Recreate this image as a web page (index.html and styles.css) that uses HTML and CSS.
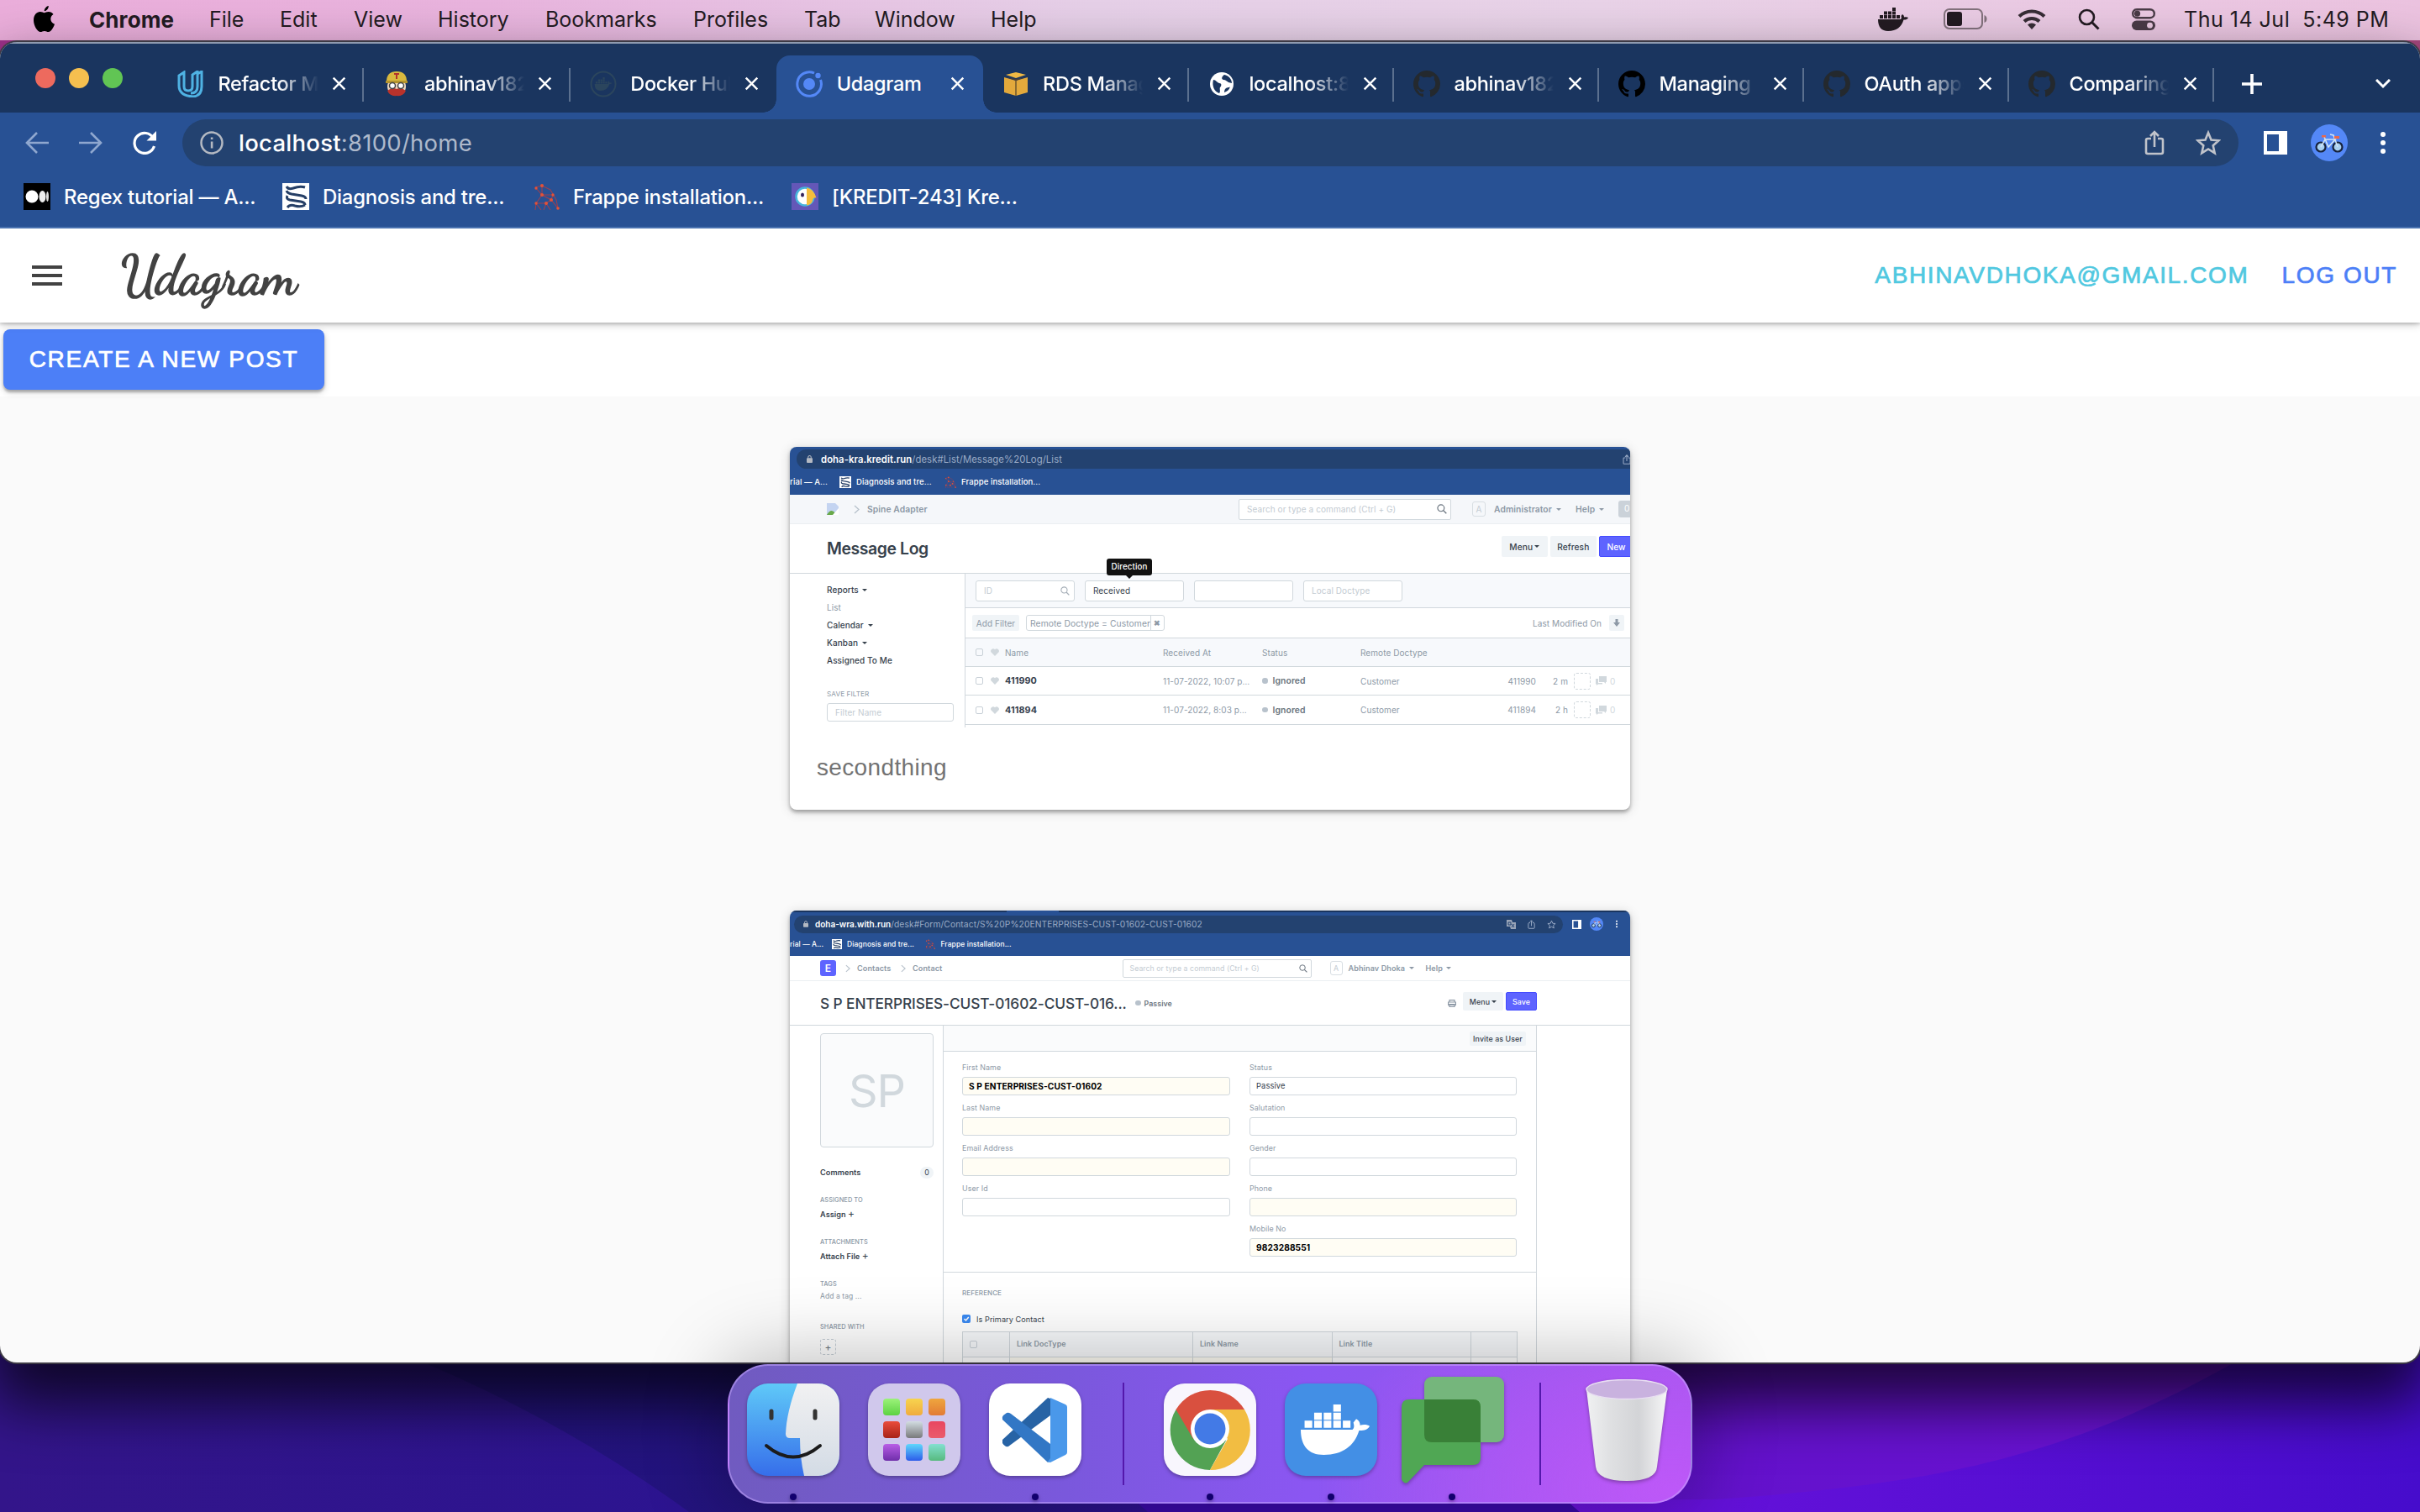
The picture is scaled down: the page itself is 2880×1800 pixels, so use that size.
FILE: index.html
```html
<!DOCTYPE html>
<html lang="en">
<head>
<meta charset="utf-8">
<title>Udagram</title>
<link rel="stylesheet" href="styles.css">
</head>
<body>
<svg class="defs" width="0" height="0" aria-hidden="true">
  <defs>
    <linearGradient id="gFinder" x1="0" y1="0" x2="0" y2="1"><stop offset="0" stop-color="#5fc9f8"/><stop offset="1" stop-color="#366eea"/></linearGradient>
    <linearGradient id="gFace" x1="0" y1="0" x2="0" y2="1"><stop offset="0" stop-color="#f1f1f2"/><stop offset="1" stop-color="#d3dbe5"/></linearGradient>
    <linearGradient id="gTrash" x1="0" y1="0" x2="1" y2="0"><stop offset="0" stop-color="#f0f1f2"/><stop offset=".3" stop-color="#dfe0e2"/><stop offset=".65" stop-color="#d3d4d7"/><stop offset="1" stop-color="#f6f6f7"/></linearGradient>
    <linearGradient id="gLeft" x1="0" y1="0" x2="1" y2="0"><stop offset="0" stop-color="#33158a"/><stop offset="1" stop-color="#2c1490"/></linearGradient>
    <linearGradient id="gMid" x1="0" y1="0" x2="1" y2="0"><stop offset="0" stop-color="#251284"/><stop offset=".4" stop-color="#22147a"/><stop offset=".55" stop-color="#3a0da8"/><stop offset=".72" stop-color="#6412cc"/><stop offset="1" stop-color="#6d12d8"/></linearGradient>
    <linearGradient id="gRight" x1="0" y1="0" x2="1" y2="0"><stop offset="0" stop-color="#6a12dc"/><stop offset="1" stop-color="#460ccc"/></linearGradient>
    <symbol id="close" viewBox="0 0 20 20"><path d="M2 2 18 18M18 2 2 18" stroke="#fff" stroke-width="2.8" fill="none"/></symbol>
    <symbol id="github" viewBox="0 0 16 16"><path d="M8 0C3.58 0 0 3.58 0 8c0 3.54 2.29 6.53 5.47 7.59.4.07.55-.17.55-.38 0-.19-.01-.82-.01-1.49-2.01.37-2.53-.49-2.69-.94-.09-.23-.48-.94-.82-1.13-.28-.15-.68-.52-.01-.53.63-.01 1.08.58 1.23.82.72 1.21 1.87.87 2.33.66.07-.52.28-.87.51-1.07-1.78-.2-3.64-.89-3.64-3.95 0-.87.31-1.59.82-2.15-.08-.2-.36-1.02.08-2.12 0 0 .67-.21 2.2.82.64-.18 1.32-.27 2-.27s1.36.09 2 .27c1.53-1.04 2.2-.82 2.2-.82.44 1.1.16 1.92.08 2.12.51.56.82 1.27.82 2.15 0 3.07-1.87 3.75-3.65 3.95.29.25.54.73.54 1.48 0 1.07-.01 1.93-.01 2.2 0 .21.15.46.55.38A8.01 8.01 0 0 0 16 8c0-4.42-3.58-8-8-8z"/></symbol>
    <symbol id="whale" viewBox="0 0 36 28"><path d="M0 14h27c1-1 1-2 .5-4l1.500-2c1.500 1 2 2 2 3.500 2-.5 4-.3 5 .5-1 2-3 2.600-5.500 2.500C28 23 22 28 12 28 4 28 0 23 0 14z"/><path d="M2 9h4v4H2zM7 9h4v4H7zM12 9h4v4h-4zM17 9h4v4h-4zM22 9h4v4h-4zM7 4.500h4v4H7zM12 4.500h4v4h-4zM17 4.500h4v4h-4zM17 0h4v4h-4z"/></symbol>
    <symbol id="share" viewBox="0 0 24 30"><path d="M8 10H4q-2 0-2 2v14q0 2 2 2h16q2 0 2-2V12q0-2-2-2h-4M12 20V3M7 7l5-5 5 5" fill="none" stroke="currentColor" stroke-width="2.600"/></symbol>
    <symbol id="star" viewBox="0 0 30 30"><path d="m15 3 3.500 8.500 9 .8-6.800 6 2 8.900L15 22.500l-7.700 4.700 2-8.900-6.800-6 9-.8z" fill="none" stroke="currentColor" stroke-width="2.600"/></symbol>
    <symbol id="lens" viewBox="0 0 26 26"><circle cx="10.500" cy="10.500" r="8.500" fill="none" stroke="currentColor" stroke-width="2.600"/><path d="m16.500 16.500 8 8" stroke="currentColor" stroke-width="3"/></symbol>
    <symbol id="lock" viewBox="0 0 8 10"><rect y="3.500" width="8" height="6.500" rx="1"/><path d="M2 4V2.500a2 2 0 0 1 4 0V4" fill="none" stroke="currentColor" stroke-width="1.200"/></symbol>
    <symbol id="chev" viewBox="0 0 7 11"><path d="m1 1 5 4.500L1 10" fill="none" stroke="#b8c2cc" stroke-width="1.300"/></symbol>
    <symbol id="heart" viewBox="0 0 10 9"><path d="M5 9 .8 4.800A2.600 2.600 0 0 1 5 1.300 2.600 2.600 0 0 1 9.200 4.800z" fill="#d1d8dd"/></symbol>
    <symbol id="chat" viewBox="0 0 13 11"><path d="M4 0h9v7h-1v2l-2-2H4z" fill="#d1d8dd"/><path d="M0 3h3v5h5v1.500H3L1 11V9.500H0z" fill="#d1d8dd"/></symbol>
    <symbol id="script" viewBox="0 0 32 32"><path d="M0 0h32v32H0z" fill="#fff"/><g fill="none" stroke="#263f66" stroke-width="3"><path d="M5 4q2 4 8 2 8-3 14-1"/><path d="M5 9q1 3 6 4l12 2q5 1 5 4"/><path d="M6 15q-2 4 3 5l13 2q5 1 5 4"/><path d="M6 29q3-4 9-2 7 2 12-1"/></g></symbol>
    <symbol id="net" viewBox="0 0 32 32"><path d="M3 5 11 3 21 8 28 20 30 30M4 6 11 14 22 20 30 30M11 3v11M11 14 4 24M11 14l13 0M24 14l-2 6M16 24l6-4M4 24l12 0M4 24l-1 8M4 24l6 8M16 24l-3 8M16 24l5 8" fill="none" stroke="#9a4052" stroke-width="1.100"/><g fill="#e25238"><circle cx="11" cy="3" r="2"/><circle cx="4" cy="6" r="1.700"/><circle cx="11" cy="14" r="2"/><circle cx="24" cy="14" r="1.700"/><circle cx="4" cy="24" r="1.700"/><circle cx="16" cy="24" r="2"/><circle cx="22" cy="20" r="2"/><circle cx="30" cy="30" r="1.800"/></g></symbol>
    <symbol id="bike" viewBox="0 0 44 44"><circle cx="22" cy="22" r="22" fill="#5488f7"/><g fill="#a9d0f0" stroke="#17233d" stroke-width="2.200"><circle cx="12" cy="27" r="5.500"/><circle cx="32" cy="27" r="5.500"/></g><path d="M12 27 17 18h12l-8 9-5-12M32 27 27 13l-4-1" fill="none" stroke="#cfe3f5" stroke-width="1.600"/><path d="M13 13h5v2.500h-5zM28 14h6v3h-6z" fill="#e8694d"/></symbol>
  </defs>
</svg>

<div class="desktop">
  <svg class="wallpaper" viewBox="0 0 2880 240" preserveAspectRatio="none">
    <rect width="2880" height="240" fill="url(#gMid)"/>
    <path d="M0 0H330Q600 80 820 240H0z" fill="url(#gLeft)"/>
    <path d="M1350 226 1366 240H1880L1864 226z" fill="#3a0aa8"/>
    <path d="M2760 0C2500 170 2330 205 2040 225L1864 226 1880 240H2880V0z" fill="url(#gRight)"/>
  </svg>

  <header class="menubar">
    <nav class="menus">
      <svg class="apple" viewBox="0 0 25 32"><path d="M17.800 0c.2 2.600-1.800 6-5 6.300C12.500 3.700 15 .6 17.800 0zM12.800 8.200c1 0 2.700-1.300 5-1.200 2.400.1 4.400 1.200 5.700 3-4.800 3.100-4 9.800 1.500 11.700-1.500 4.300-4.300 9.300-7.400 9.300-1.800 0-2.500-1.100-4.700-1.100S9.800 31 8.200 31C4.500 31 0 23.300 0 17.200 0 10.500 4 7.100 7.800 7.100c2.100 0 3.800 1.100 5 1.100z"/></svg>
      <b class="m1">Chrome</b><span class="m2">File</span><span class="m3">Edit</span><span class="m4">View</span><span class="m5">History</span><span class="m6">Bookmarks</span><span class="m7">Profiles</span><span class="m8">Tab</span><span class="m9">Window</span><span>Help</span>
    </nav>
    <div class="status">
      <svg width="36" height="28" fill="#231b22"><use href="#whale"/></svg>
      <svg width="52" height="26" viewBox="0 0 52 26"><rect x="1" y="1" width="45" height="23" rx="6" fill="none" stroke="#83727d" stroke-width="2"/><rect x="4" y="4" width="18" height="17" rx="3" fill="#231b22"/><path d="M48.500 8q3 1 3 4.500t-3 4.500z" fill="#83727d"/></svg>
      <svg width="34" height="26" viewBox="0 0 34 26"><path d="M2 9.500a21.500 21.500 0 0 1 30 0M8 15.500a13 13 0 0 1 18 0" fill="none" stroke="#372c35" stroke-width="4"/><path d="m17 25-5-5.500a7.500 7.500 0 0 1 10 0z" fill="#372c35"/></svg>
      <svg width="26" height="26" color="#231b22"><use href="#lens"/></svg>
      <svg width="28" height="26" viewBox="0 0 28 26"><rect x="1.200" y="1.200" width="25.600" height="10" rx="5" fill="none" stroke="#4a3b47" stroke-width="2.400"/><circle cx="6.500" cy="6.200" r="3.600" fill="#4a3b47"/><rect y="14.500" width="28" height="11.500" rx="5.700" fill="#4a3b47"/><circle cx="21.500" cy="20.200" r="3.400" fill="#e9c9e0"/></svg>
      <span class="clock">Thu 14 Jul&nbsp; 5:49 PM</span>
    </div>
  </header>

  <main class="window">
    <div class="tabstrip">
      <div class="lights"><i class="red"></i><i class="yellow"></i><i class="green"></i></div>
      <div class="tab wide"><svg width="32" height="32" viewBox="0 0 32 32"><path d="M2 6 8 2v17q0 5 5 5t5-5V5l6-4v3l5-3v18q0 11-10 12Q2 30 2 18zM24 4v15q0 8-8 8" fill="none" stroke="#4fb2e3" stroke-width="3"/></svg><span>Refactor Mon</span><svg width="17" height="17"><use href="#close"/></svg></div>
      <div class="tab wide"><svg width="32" height="32" viewBox="0 0 32 32"><circle cx="16" cy="19" r="11" fill="#efd9bd"/><path d="M4 13Q4 1 16 1t12 12z" fill="#d9b93e"/><path d="M3 12h26v3H3z" fill="#b5942c"/><path d="M13 3h6v2h-2v5h-2V5h-2z" fill="#b3312c"/><path d="M5 24q6-5 11-2 5-3 11 2-3 7-11 6-8 1-11-6z" fill="#b9322b"/><g fill="#fff" stroke="#444" stroke-width="1.500"><circle cx="11" cy="18" r="3.500"/><circle cx="21" cy="18" r="3.500"/></g></svg><span>abhinav182</span><svg width="17" height="17"><use href="#close"/></svg></div>
      <div class="tab wide plain"><svg width="32" height="32" viewBox="0 0 32 32"><circle cx="16" cy="16" r="14.500" fill="none" stroke="#2b455d" stroke-width="2"/><svg x="5" y="8" width="22" height="16" fill="#2b455d"><use href="#whale"/></svg></svg><span>Docker Hub</span><svg width="17" height="17"><use href="#close"/></svg></div>
      <div class="tab wide active"><svg width="32" height="32" viewBox="0 0 32 32"><path d="M22 3A14.300 14.300 0 1 0 29.500 11" fill="none" stroke="#5488f7" stroke-width="3"/><circle cx="16" cy="16" r="7" fill="#5488f7"/><circle cx="26.500" cy="6" r="3.200" fill="#5488f7"/></svg><span>Udagram</span><svg width="17" height="17"><use href="#close"/></svg></div>
      <div class="tab wide"><svg width="28" height="28" viewBox="0 0 28 28"><path d="M0 6 14 10 28 6V24L14 28 0 24z" fill="#e3a93c"/><path d="M2 3 14 0 26 3 14 7z" fill="#f0b944"/><path d="M13 8h2v20h-2z" fill="#8a6a30"/><path d="m3 6 11 4 11-4-11 2z" fill="#4c3f35"/></svg><span>RDS Manag</span><svg width="17" height="17"><use href="#close"/></svg></div>
      <div class="tab"><svg width="28" height="28" viewBox="0 0 28 28"><circle cx="14" cy="14" r="14" fill="#fff"/><path d="M4 9c3 0 4 3 7 4 3 0 3 3 1 5-1 2 1 5-1 7-6-2-9-9-7-16zM17 3c-3 2-4 5-1 6 3 0 4 2 6 3l4 1C26 8 22 4 17 3zM17 24c0-4 2-6 6-6l1-1c-1 4-4 6-7 7z" fill="#1a355f"/></svg><span>localhost:8</span><svg width="17" height="17"><use href="#close"/></svg></div>
      <div class="tab"><svg width="32" height="32" fill="#24292e"><use href="#github"/></svg><span>abhinav182</span><svg width="17" height="17"><use href="#close"/></svg></div>
      <div class="tab"><svg width="32" height="32" fill="#000"><use href="#github"/></svg><span>Managing</span><svg width="17" height="17"><use href="#close"/></svg></div>
      <div class="tab"><svg width="32" height="32" fill="#24292e"><use href="#github"/></svg><span>OAuth apps</span><svg width="17" height="17"><use href="#close"/></svg></div>
      <div class="tab"><svg width="32" height="32" fill="#24292e"><use href="#github"/></svg><span>Comparing</span><svg width="17" height="17"><use href="#close"/></svg></div>
      <svg class="plus" width="24" height="24" viewBox="0 0 24 24"><path d="M12 0v24M0 12h24" stroke="#fff" stroke-width="3.600"/></svg>
      <svg class="more" width="18" height="12" viewBox="0 0 18 12"><path d="m1 1 8 8 8-8" fill="none" stroke="#fff" stroke-width="3"/></svg>
    </div>

    <div class="toolbar">
      <svg width="28" height="26" viewBox="0 0 28 26"><path d="M28 13H3M14 1 2 13l12 12" fill="none" stroke="#8fa7cf" stroke-width="2.600"/></svg>
      <svg width="28" height="26" viewBox="0 0 28 26"><path d="M0 13h25M14 1l12 12-12 12" fill="none" stroke="#8fa7cf" stroke-width="2.600"/></svg>
      <svg width="28" height="28" viewBox="0 0 28 28"><path d="M24.500 8.500A12 12 0 1 0 25.500 18" fill="none" stroke="#fff" stroke-width="3.200"/><path d="M28 0v11.500H16.500z" fill="#fff"/></svg>
      <div class="omnibox">
        <svg width="28" height="28" viewBox="0 0 28 28"><circle cx="14" cy="14" r="12.500" fill="none" stroke="#b4b9c2" stroke-width="2.500"/><path d="M12.800 12.500h2.600v8h-2.600zM12.800 7.500h2.600v2.600h-2.600z" fill="#b4b9c2"/></svg>
        <span class="url"><b>localhost</b>:8100/home</span>
        <svg class="osh" width="24" height="30"><use href="#share"/></svg>
        <svg width="30" height="30"><use href="#star"/></svg>
      </div>
      <svg class="panel" width="28" height="28" viewBox="0 0 28 28"><path fill-rule="evenodd" d="M0 0h28v28H0zM4 4v20h14V4z" fill="#fff"/></svg>
      <svg class="me" width="44" height="44"><use href="#bike"/></svg>
      <svg class="dots" width="6" height="26" viewBox="0 0 6 26" fill="#fff"><circle cx="3" cy="3" r="3"/><circle cx="3" cy="13" r="3"/><circle cx="3" cy="23" r="3"/></svg>
    </div>

    <div class="bookmarks">
      <svg width="32" height="32" viewBox="0 0 32 32"><path d="M0 0h32v32H0z"/><circle cx="10" cy="16" r="7.500" fill="#fff"/><ellipse cx="22.500" cy="16" rx="4" ry="7" fill="#eee"/><ellipse cx="28.500" cy="16" rx="1.500" ry="6" fill="#ddd"/></svg><span>Regex tutorial — A...</span>
      <svg width="32" height="32"><use href="#script"/></svg><span>Diagnosis and tre...</span>
      <svg width="32" height="32"><use href="#net"/></svg><span>Frappe installation...</span>
      <svg width="32" height="32" viewBox="0 0 32 32"><path d="M0 0h32v32H0z" fill="#6457b8"/><circle cx="16" cy="16" r="10.500" fill="#fff" stroke="#48b4dc" stroke-width="2.500"/><path d="M18 5.500q8 1 11.500 12-3-1-4 1.500-1 7-7.500 7.500z" fill="#f5bd3c"/><ellipse cx="13" cy="14" rx="2" ry="2.600" fill="#33235c"/></svg><span>[KREDIT-243] Kre...</span>
    </div>

    <div class="page">
      <header class="appbar">
        <div class="burger"><i></i><i></i><i></i></div>
        <h1>Udagram</h1>
        <span class="email">ABHINAVDHOKA@GMAIL.COM</span>
        <span class="logout">LOG OUT</span>
      </header>
      <div class="actions"><button>CREATE A NEW POST</button></div>

      <section class="feed">
        <article class="card">
          <div class="shot one">
            <div class="s-top">
              <div class="s-omni"><svg width="7" height="9" fill="#b4b9c2" color="#b4b9c2"><use href="#lock"/></svg><span><b>doha-kra.kredit.run</b>/desk#List/Message%20Log/List</span><svg class="s-share" width="10" height="12"><use href="#share"/></svg></div>
              <div class="s-marks"><span>rial — A...</span><svg width="14" height="14"><use href="#script"/></svg><span>Diagnosis and tre...</span><svg width="14" height="14"><use href="#net"/></svg><span>Frappe installation...</span></div>
            </div>
            <div class="s-nav">
              <svg width="14" height="14" viewBox="0 0 14 14"><path d="M0 0h10l4 4v10H0z" fill="#c4d4f1"/><path d="M0 14q5-9 10-2l-2 2z" fill="#69a94a"/><path d="m14 6-7 8h7z" fill="#fff"/></svg>
              <svg width="7" height="11"><use href="#chev"/></svg><b>Spine Adapter</b>
              <div class="s-search">Search or type a command (Ctrl + G)<svg width="12" height="12"><use href="#lens"/></svg></div>
              <em>A</em><b>Administrator <i class="caret"></i></b><b>Help <i class="caret"></i></b><u>0</u>
            </div>
            <div class="s-title"><strong>Message Log</strong><span class="btn">Menu <i class="caret"></i></span><span class="btn">Refresh</span><span class="btn blue">New</span></div>
            <div class="s-body">
              <aside>
                <p>Reports <i class="caret"></i></p><p class="dim">List</p><p>Calendar <i class="caret"></i></p><p>Kanban <i class="caret"></i></p><p>Assigned To Me</p>
                <h6>SAVE FILTER</h6><div class="field">Filter Name</div>
              </aside>
              <div class="s-list">
                <div class="filters"><div class="field">ID<svg width="11" height="11"><use href="#lens"/></svg></div><div class="field on">Received<div class="tip">Direction</div></div><div class="field"></div><div class="field">Local Doctype</div></div>
                <div class="chips"><span class="add">Add Filter</span><span class="chip">Remote Doctype = Customer<b>✖</b></span><span class="last">Last Modified On</span><span class="down"><svg width="8" height="9" viewBox="0 0 8 9"><path d="M2.500 0h3v4H8L4 9 0 4h2.500z" fill="#8d99a6"/></svg></span></div>
                <div class="row head"><i class="box"></i><svg width="10" height="9"><use href="#heart"/></svg><span>Name</span><span>Received At</span><span>Status</span><span>Remote Doctype</span></div>
                <div class="row"><i class="box"></i><svg width="10" height="9"><use href="#heart"/></svg><strong>411990</strong><span>11-07-2022, 10:07 p…</span><span class="st">Ignored</span><span>Customer</span><span class="r">411990</span><span class="r">2 m</span><i class="dash"></i><svg width="13" height="11"><use href="#chat"/></svg><span class="nil">0</span></div>
                <div class="row"><i class="box"></i><svg width="10" height="9"><use href="#heart"/></svg><strong>411894</strong><span>11-07-2022, 8:03 p…</span><span class="st">Ignored</span><span>Customer</span><span class="r">411894</span><span class="r">2 h</span><i class="dash"></i><svg width="13" height="11"><use href="#chat"/></svg><span class="nil">0</span></div>
              </div>
            </div>
          </div>
          <p class="caption">secondthing</p>
        </article>

        <article class="card second">
          <div class="shot two">
            <div class="s-top">
              <div class="sliver"></div>
              <div class="bar"><div class="s-omni"><svg width="6" height="8" fill="#b4b9c2" color="#b4b9c2"><use href="#lock"/></svg><span><b>doha-wra.with.run</b>/desk#Form/Contact/S%20P%20ENTERPRISES-CUST-01602-CUST-01602</span>
                <svg width="11" height="11" viewBox="0 0 11 11"><path d="M0 0h6l1 3h4v8H5L4 8H0z" fill="#9aa5b8"/><path d="M2 3h3v3H2zM6 5l3 4M9 5 6 9" stroke="#234270" fill="none"/></svg>
                <svg width="9" height="11"><use href="#share"/></svg><svg width="11" height="11"><use href="#star"/></svg></div>
                <svg width="11" height="11" viewBox="0 0 28 28"><path fill-rule="evenodd" d="M0 0h28v28H0zM4 4v20h14V4z" fill="#fff"/></svg><svg width="16" height="16"><use href="#bike"/></svg><svg width="2" height="10" viewBox="0 0 6 26" fill="#fff"><circle cx="3" cy="3" r="3"/><circle cx="3" cy="13" r="3"/><circle cx="3" cy="23" r="3"/></svg></div>
              <div class="s-marks"><span>rial — A...</span><svg width="12" height="12"><use href="#script"/></svg><span>Diagnosis and tre...</span><svg width="12" height="12"><use href="#net"/></svg><span>Frappe installation...</span></div>
            </div>
            <div class="s-nav"><span class="logo-e">E</span><svg width="6" height="10"><use href="#chev"/></svg><b>Contacts</b><svg width="6" height="10"><use href="#chev"/></svg><b>Contact</b><div class="s-search">Search or type a command (Ctrl + G)<svg width="10" height="10"><use href="#lens"/></svg></div><em>A</em><b>Abhinav Dhoka <i class="caret"></i></b><b>Help <i class="caret"></i></b></div>
            <div class="s-title"><strong>S P ENTERPRISES-CUST-01602-CUST-016...</strong><b class="st">Passive</b><svg width="10" height="9" viewBox="0 0 10 9"><path d="M2 3V.6h6V3M.6 3h8.800v3.500H.6zM2 5.500h6v3H2z" fill="none" stroke="#8d99a6" stroke-width="1.200"/></svg><span class="btn">Menu <i class="caret"></i></span><span class="btn blue">Save</span></div>
            <div class="s-body">
              <aside>
                <div class="avatar">SP</div>
                <div class="cm"><b>Comments</b><span>0</span></div>
                <h6>ASSIGNED TO</h6><b>Assign <i class="pl">+</i></b>
                <h6>ATTACHMENTS</h6><b>Attach File <i class="pl">+</i></b>
                <h6>TAGS</h6><span class="tag">Add a tag ...</span>
                <h6 class="sh">SHARED WITH</h6><span class="plusbox">+</span>
              </aside>
              <div class="form">
                <div class="f-top"><span>Invite as User</span></div>
                <div class="f-grid">
                  <div class="col">
                    <label>First Name</label><div class="in warm"><b>S P ENTERPRISES-CUST-01602</b></div>
                    <label>Last Name</label><div class="in warm"></div>
                    <label>Email Address</label><div class="in warm"></div>
                    <label>User Id</label><div class="in"></div>
                  </div>
                  <div class="col">
                    <label>Status</label><div class="in">Passive</div>
                    <label>Salutation</label><div class="in"></div>
                    <label>Gender</label><div class="in"></div>
                    <label>Phone</label><div class="in warm"></div>
                    <label>Mobile No</label><div class="in warm"><b>9823288551</b></div>
                  </div>
                </div>
                <div class="ref">
                  <h6>REFERENCE</h6>
                  <div class="check"><svg width="10" height="10" viewBox="0 0 10 10"><rect width="10" height="10" rx="2" fill="#3b8af2"/><path d="m2.500 5 2 2 3.300-4" fill="none" stroke="#fff" stroke-width="1.500"/></svg>Is Primary Contact</div>
                  <div class="grid"><span><i class="box"></i></span><b>Link DocType</b><b>Link Name</b><b>Link Title</b><span></span><span></span><span class="warm"></span><span class="warm"></span><span></span><span></span></div>
                </div>
              </div>
            </div>
          </div>
        </article>
      </section>
    </div>
  </main>

  <footer class="dock">
    <div class="app run"><svg width="110" height="110" viewBox="0 0 110 110"><clipPath id="rc"><rect width="110" height="110" rx="25"/></clipPath><g clip-path="url(#rc)"><path d="M0 0h110v110H0z" fill="url(#gFinder)"/><path d="M60 0Q47 34 46 60q0 5 5 5h12q0 24 5 45h42V0z" fill="url(#gFace)"/></g><path d="M29 33v8M81 33v8" stroke="#333" stroke-width="5" stroke-linecap="round"/><path d="M23 74q32 27 64 0" fill="none" stroke="#1b1b1b" stroke-width="4" stroke-linecap="round"/></svg></div>
    <div class="app"><div class="pad"><i class="p1"></i><i class="p2"></i><i class="p3"></i><i class="p4"></i><i class="p5"></i><i class="p6"></i><i class="p7"></i><i class="p8"></i><i class="p9"></i></div></div>
    <div class="app run"><svg width="110" height="110" viewBox="0 0 110 110"><rect width="110" height="110" rx="25" fill="#fff"/><path d="M16 67 70 17l3 1v20L23 75q-4 1-7-4z" fill="#2763a5"/><path d="M16 43q-1-3 1-5l4-3q2-1 5 1l47 36v20l-3 2z" fill="#3277c5"/><path d="M73 17 91 25q2 1 2 3v54q0 2-2 3L73 94q-2 0-3-1l3-4z" fill="#4a98ea"/></svg></div>
    <hr>
    <div class="app run"><svg width="110" height="110" viewBox="0 0 110 110"><rect width="110" height="110" rx="25" fill="#f8f6fd"/><path d="M55 55 14.500 31A47.500 47.500 0 0 1 96 31z" fill="#d9503f"/><path d="M55 55 14.500 31A47.500 47.500 0 0 0 55 103L74 68z" fill="#53a254"/><path d="M55 31h41A47.500 47.500 0 0 1 55 103L76 66z" fill="#f2bd42"/><path d="M14.500 31 35 66 55 31z" fill="#d9503f"/><circle cx="55" cy="54" r="23" fill="#fff"/><circle cx="55" cy="54" r="18.500" fill="#437ae6"/></svg></div>
    <div class="app run"><svg width="110" height="110" viewBox="0 0 110 110"><rect width="110" height="110" rx="25" fill="#438fe5"/><svg x="19" y="25" width="82" height="60" viewBox="0 0 36 28" preserveAspectRatio="none" fill="#fff"><use href="#whale" width="36" height="28"/></svg></svg></div>
    <div class="app run chat"><svg width="122" height="127" viewBox="0 0 122 127"><rect x="27" width="95" height="78" rx="9" fill="#75b67c"/><path d="M9 27h76q9 0 9 9v60q0 9-9 9H27L8 125q-3 3-6 0-2-1-2-5V36q0-9 9-9z" fill="#50a754"/><path d="M27 27h58q9 0 9 9v42H36q-9 0-9-9z" fill="#398037"/></svg></div>
    <hr>
    <div class="app bin"><svg width="98" height="122" viewBox="0 0 98 122"><path d="M1 12 12 104q2 17 37 17t36-17L97 12z" fill="url(#gTrash)"/><ellipse cx="49" cy="12" rx="48" ry="11.500" fill="#c9b2df" stroke="#e9dff2" stroke-width="1.500"/></svg></div>
  </footer>
</div>
</body>
</html>
```
FILE: styles.css
```css
* { box-sizing: border-box; }
body { margin: 0; font-family: Inter, "Noto Sans", sans-serif; }
svg { display: block; flex: none; }
.defs { position: absolute; }
.desktop { position: relative; width: 2880px; height: 1800px; overflow: hidden; background: linear-gradient(90deg, #a0328c, #7a2030 60%, #a8487f); }
.wallpaper { position: absolute; left: 0; bottom: 0; width: 2880px; height: 240px; }

/* menu bar */
.menubar { position: relative; height: 48px; display: flex; justify-content: space-between; align-items: center; padding: 0 38px 2px 40px; color: #231b22; font-size: 25px; white-space: nowrap; background: linear-gradient(90deg, #ebaedb 0, #e9b4de 20%, #e6d0e8 45%, #e9d3e8 66%, #ecc3e0 100%); }
.menus, .status { display: flex; align-items: center; }
.apple { width: 25px; height: 32px; margin-right: 41px; }
.m1 { width: 143px; } .m2 { width: 84px; } .m3 { width: 88px; } .m4 { width: 100px; } .m5 { width: 128px; } .m6 { width: 176px; } .m7 { width: 132px; } .m8 { width: 84px; } .m9 { width: 138px; }
.menus b { font-weight: 700; font-size: 26px; letter-spacing: .1px; }
.status svg:nth-child(1) { margin-right: 42px; }
.status svg:nth-child(2) { margin-right: 36px; }
.status svg:nth-child(3), .status svg:nth-child(4) { margin-right: 38px; }
.clock { width: 243px; margin-left: 34px; letter-spacing: .5px; }

/* browser window */
.window { position: relative; display: flex; flex-direction: column; height: 1572px; margin-top: 2px; border-radius: 20px; overflow: hidden; background: #fafafa; box-shadow: 0 0 0 2px #3d3a45, 0 40px 70px 10px rgba(0,0,0,.7); }
.tabstrip { height: 84px; flex: none; display: flex; align-items: center; padding: 0 0 0 42px; background: #1a355f; border-top: 2px solid #8f9bb0; }
.lights { display: flex; gap: 16px; width: 146px; flex: none; margin-top: -1px; }
.lights i { width: 24px; height: 24px; border-radius: 50%; }
.red { background: #ed6a5e; } .yellow { background: #f5bf4f; } .green { background: #61c554; }
.tab { position: relative; flex: none; width: 244px; height: 68px; margin-top: 14px; display: grid; grid-template-columns: 32px 120px 1fr; column-gap: 16px; align-items: center; justify-items: center; padding: 0 0 1px 23px; color: #fff; font-size: 23.500px; font-weight: 500; letter-spacing: -.3px; }
.tab.wide { width: 245.400px; }
.tab span { width: 119px; overflow: hidden; white-space: nowrap; -webkit-mask: linear-gradient(90deg, #000 60%, transparent); mask: linear-gradient(90deg, #000 60%, transparent); }
.tab > svg:last-child { margin-right: 23px; }
.tab::after { content: ""; position: absolute; right: 0; top: 15px; width: 2px; height: 40px; background: #5b708f; }
.tab.plain::after, .tab.active::after { display: none; }
.tab.active { background: #285194; border-radius: 16px 16px 0 0; }
.tab.active::before { content: ""; position: absolute; left: -16px; right: -16px; bottom: 0; height: 16px; background: radial-gradient(circle at 0 0, transparent 15.500px, #285194 16px) left / 16px 16px no-repeat, radial-gradient(circle at 100% 0, transparent 15.500px, #285194 16px) right / 16px 16px no-repeat; }
.tab.active span { -webkit-mask: none; mask: none; }
.plus { margin: 14px 0 0 33px; }
.more { margin: 14px 0 0 135px; }
.toolbar { height: 72px; flex: none; display: flex; align-items: center; padding: 0 41px 0 30px; background: #285194; }
.toolbar > svg:nth-child(1), .toolbar > svg:nth-child(2) { margin-right: 36px; }
.toolbar > svg:nth-child(3) { margin-right: 31px; }
.omnibox { width: 2447px; height: 56px; border-radius: 28px; background: #234270; display: flex; align-items: center; padding: 0 21px 0 21px; color: #c0c3ca; }
.url { margin-left: 18px; flex: 1; font-size: 27.500px; color: #aeb9cb; letter-spacing: .25px; }
.url b { font-weight: 500; color: #fff; }
.osh { margin-right: 37px; }
.panel { margin-left: 30px; } .me { margin-left: 28px; } .dots { margin-left: 39px; }
.bookmarks { height: 66px; flex: none; display: grid; grid-template-columns: 32px 276px 32px 266px 32px 276px 32px auto; justify-content: start; align-items: center; padding: 0 0 8px 28px; background: #285194; border-bottom: 2px solid #4a72b0; color: #fff; font-size: 23.900px; font-weight: 500; letter-spacing: -.2px; white-space: nowrap; }
.bookmarks span { padding-left: 16px; }

/* Udagram page */
.page { flex: 1; min-height: 0; overflow: hidden; display: flex; flex-direction: column; }
.appbar { position: relative; z-index: 1; height: 112px; flex: none; display: flex; align-items: center; background: #fff; padding: 0 27px 0 38px; box-shadow: 0 1px 10px rgba(0,0,0,.3), 0 2px 3px rgba(0,0,0,.12); font-family: "Liberation Sans", Arial, sans-serif; font-size: 28px; letter-spacing: 1.640px; }
.burger { display: grid; gap: 6px; width: 36px; }
.burger i { height: 4px; background: #424242; }
h1 { margin: 2px auto 0 70px; font: 400 64px/1 "Dancing Script", "Liberation Serif", serif; color: #424242; letter-spacing: -1.300px; -webkit-text-stroke: 1.500px #424242; }
.email { color: #50c8e0; margin-right: 39px; -webkit-text-stroke: .7px #50c8e0; }
.logout { color: #4c7ff7; -webkit-text-stroke: .7px #4c7ff7; }
.actions { height: 88px; flex: none; background: #fff; padding: 8px 4px; }
.actions button { display: block; width: 382px; height: 72px; border: 0; border-radius: 8px; padding: 0; background: #4c7ff7; color: #fff; font: 28px "Liberation Sans", Arial, sans-serif; letter-spacing: 1.680px; -webkit-text-stroke: .7px #fff; box-shadow: 0 3px 3px rgba(0,0,0,.25), 0 3px 8px rgba(0,0,0,.18); }
.feed { flex: 1; padding-top: 60px; display: flex; flex-direction: column; align-items: center; gap: 120px; }
.card { width: 1000px; flex: none; border-radius: 8px; overflow: hidden; background: #fff; box-shadow: 0 3px 4px rgba(0,0,0,.3), 0 2px 14px rgba(0,0,0,.16); }
.card:first-child { height: 432px; }
.second { height: 700px; }
.caption { margin: 30px 32px; font: 28px/36px "Liberation Sans", Arial, sans-serif; letter-spacing: .35px; color: #737373; }

/* post pictures */
.shot { font-size: 10px; letter-spacing: .08px; color: #36414c; white-space: nowrap; overflow: hidden; }
.one { height: 334px; }
.shot h6, .shot p { margin: 0; font-weight: 500; }
.caret { display: inline-block; border: 3px solid transparent; border-top-color: currentColor; border-bottom: 0; margin-left: 2px; vertical-align: 2px; }
.box { width: 9px; height: 9px; border: 1px solid #c8d0d7; border-radius: 2px; display: block; }
.s-top { background: #285194; color: #fff; }
.one .s-top { height: 57px; padding-top: 3px; }
.s-omni { display: flex; align-items: center; background: #234270; color: #9aabc6; border-radius: 12px; }
.s-omni b { color: #fff; font-weight: 600; }
.one .s-omni { height: 23px; width: 1010px; margin-left: 8px; padding: 0 17px 0 12px; gap: 10px; font-size: 11.300px; }
.one .s-share { margin-left: auto; }
.s-marks { display: flex; align-items: center; font-weight: 500; }
.one .s-marks { height: 31px; display: grid; grid-template-columns: 59px 20px 105px 20px auto; justify-content: start; font-size: 9.550px; }
.s-nav { display: grid; align-items: center; color: #8d99a6; border-bottom: 1px solid #ebeff2; }
.s-nav b { font-weight: 600; }
.one .s-nav { height: 35px; background: #f5f7fa; padding-left: 44px; grid-template-columns: 32px 16px 442px 278px 26px 97px 51px 25px; font-size: 10px; }
.one .s-nav > b { font-size: 10.300px; }
.s-search { display: flex; justify-content: space-between; align-items: center; background: #fff; border: 1px solid #d1d8dd; border-radius: 2px; color: #c3cbd2; }
.s-search svg { color: #6c7680; }
.one .s-search { width: 253px; height: 25px; padding: 0 4px 0 9px; }
.s-nav em { font-style: normal; width: 16px; height: 18px; border: 1px solid #d8dee3; border-radius: 3px; display: grid; place-items: center; color: #c3cbd2; }
.s-nav u { text-decoration: none; background: #cbd2d9; color: #fff; height: 20px; border-radius: 3px; padding: 3px 7px; }
.s-title { display: flex; align-items: center; border-bottom: 1px solid #d1d8dd; }
.s-title strong { font-weight: 600; }
.btn { background: #f0f4f7; border-radius: 2px; display: grid; place-content: center; grid-auto-flow: column; align-items: center; font-weight: 500; }
.blue { background: #5e64ff; color: #fff; border: 1px solid #444bff; }
.one .s-title { height: 59px; padding-left: 44px; }
.one .s-title strong { font-size: 19.400px; letter-spacing: -.4px; margin-right: auto; }
.one .btn { height: 25px; width: 54.500px; margin: -5px 3.500px 0 0; font-size: 10.200px; }
.one .btn.blue { width: 41px; margin-right: -4px; border-radius: 2px; }
.one .s-body { display: grid; grid-template-columns: 209px 791px; height: 183px; }
.one aside { padding: 9px 0 0 44px; border-right: 1px solid #d1d8dd; }
.one aside p { line-height: 20.900px; }
.one aside .dim { color: #8d99a6; font-weight: 400; }
.one h6 { color: #8d99a6; font-size: 8.200px; margin: 24px 0 6px; line-height: 10px; font-weight: 400; }
.field { position: relative; background: #fff; border: 1px solid #d1d8dd; border-radius: 3px; height: 25px; display: flex; align-items: center; justify-content: space-between; padding: 0 5px 0 9px; color: #c3cbd2; }
.field svg { color: #a5aeb7; }
.one aside .field { width: 151px; height: 22px; }
.filters .field.on { color: #36414c; }
.tip { position: absolute; left: 25px; top: -27px; width: 54px; height: 20px; border-radius: 3px; background: #111; color: #fff; display: grid; place-items: center; font-weight: 500; font-size: 9.800px; }
.tip::after { content: ""; position: absolute; top: 20px; left: 23px; border: 4px solid transparent; border-top-color: #111; border-bottom: 0; }
.filters { height: 41px; display: grid; grid-template-columns: repeat(4, 118px); column-gap: 12px; align-items: center; padding-left: 12px; background: #f7f9fc; border-bottom: 1px solid #d1d8dd; }
.chips { height: 36px; display: flex; align-items: center; padding: 0 7px 0 8px; border-bottom: 1px solid #d1d8dd; color: #8d99a6; }
.add { background: #f0f4f7; height: 19px; width: 56px; border-radius: 2px; display: grid; place-items: center; margin-right: 8px; }
.chip { border: 1px solid #d1d8dd; border-radius: 3px; height: 19px; width: 165px; padding-left: 4px; display: flex; align-items: center; justify-content: space-between; font-size: 10.300px; }
.chip b { border-left: 1px solid #d1d8dd; width: 17px; height: 17px; display: grid; place-items: center; font-size: 9px; }
.last { margin-left: auto; margin-right: 9px; }
.down { background: #f0f4f7; width: 18px; height: 19px; display: grid; place-items: center; border-radius: 2px; }
.row { height: 34.400px; display: grid; grid-template-columns: 18px 17px 188px 118px 117px 144px 65px 38px 33px 16px 10px; align-items: center; padding-left: 12px; border-bottom: 1px solid #d1d8dd; color: #8d99a6; }
.row strong { color: #36414c; font-size: 10.800px; font-weight: 700; }
.head { background: #f7f9fc; height: 34px; }
.st { font-weight: 600; color: #6c7680; display: flex; align-items: center; gap: 6px; font-size: 10.400px; }
.st::before { content: ""; width: 6.500px; height: 6.500px; border-radius: 50%; background: #b8c2cc; }
.r { text-align: right; }
.dash { width: 20px; height: 20px; border: 1px dashed #d1d8dd; border-radius: 3px; justify-self: center; }
.nil { color: #d1d8dd; padding-left: 1px; }

/* contact form picture */
.two { font-size: 8.900px; }
.two .s-top { height: 54px; }
.sliver { height: 2px; background: linear-gradient(90deg, #1a355f 258px, #285194 258px 320px, #1a355f 320px); }
.bar { display: flex; align-items: center; padding: 3px 0 0 5px; height: 25px; }
.two .s-omni { height: 21px; width: 915px; padding: 0 8px 0 11px; font-size: 10.250px; letter-spacing: .11px; }
.two .s-omni b { letter-spacing: 0; font-size: 10px; }
.two .s-omni span { margin: 0 auto 0 8px; }
.two .s-omni svg + svg { margin-left: 14px; }
.bar > svg:nth-child(2) { margin-left: 11px; }
.bar > svg:nth-child(3) { margin-left: 10px; }
.bar > svg:nth-child(4) { margin-left: 15px; }
.two .s-marks { height: 25px; display: grid; grid-template-columns: 50px 18px 93px 18.500px auto; justify-content: start; font-size: 8.500px; }
.two .s-nav { height: 30px; padding-left: 36px; grid-template-columns: 30px 14px 52px 14px 249.500px 247px 22px 92px 50px; }
.two .s-nav > b { font-size: 9.100px; }
.logo-e { width: 19px; height: 19px; border-radius: 3px; background: #5e64ff; color: #fff; display: grid; place-items: center; font-size: 12px; font-weight: 600; }
.two .s-search { width: 225px; height: 22px; padding: 0 4px 0 8px; font-size: 8.700px; }
.two .s-nav em { width: 15px; height: 17px; }
.two .s-title { height: 53px; padding-left: 36px; }
.two .s-title strong { font-size: 17.300px; font-weight: 500; letter-spacing: -.1px; width: 375px; }
.two .s-title .st { margin-right: auto; gap: 4px; font-size: 8.800px; }
.two .btn { width: 48px; height: 22px; margin: -4px 3px 0 8px; }
.two .btn.blue { width: 37px; margin: -4px 111px 0 0; }
.two .s-body { display: grid; grid-template-columns: 182px 707px; height: 580px; }
.two aside { padding: 9px 11px 0 36px; display: flex; flex-direction: column; align-items: flex-start; }
.two aside b { font-weight: 600; line-height: 12px; font-size: 9.100px; }
.avatar { width: 135px; height: 136px; border: 1px solid #d1d8dd; border-radius: 4px; background: #fafbfc; color: #d1d8dd; font-size: 54px; letter-spacing: -1px; display: grid; place-items: center; }
.cm { display: flex; justify-content: space-between; align-items: center; width: 135px; margin-top: 22px; height: 15px; }
.cm span { width: 16px; height: 14px; border-radius: 7px; background: #f0f4f7; text-align: center; line-height: 14px; }
.two h6 { color: #8d99a6; font-size: 7.400px; line-height: 10px; margin: 22px 0 6px; font-weight: 500; }
.cm + h6 { margin-top: 21px; }
.pl { font-style: normal; font-weight: 400; font-size: 12px; line-height: 10px; }
.tag { color: #8d99a6; font-size: 8.500px; line-height: 10px; margin-top: -2px; }
.two h6.sh { margin-top: 27px; margin-bottom: 9px; }
.plusbox { width: 19px; height: 19px; border: 1px dashed #c8d0d7; border-radius: 3px; display: grid; place-items: center; font-size: 12px; color: #6c7680; }
.form { border: solid #d1d8dd; border-width: 0 1px; }
.f-top { height: 31px; background: #fafbfc; border-bottom: 1px solid #d1d8dd; display: flex; align-items: center; justify-content: flex-end; padding-right: 12px; }
.f-top span { width: 67px; height: 17px; background: #f0f4f7; border-radius: 2px; display: grid; place-items: center; font-weight: 500; }
.f-grid { display: grid; grid-template-columns: 319px 318px; column-gap: 23px; padding: 13px 0 0 22px; height: 263px; border-bottom: 1px solid #d1d8dd; }
.f-grid label { display: block; line-height: 12px; height: 17px; color: #8d99a6; }
.in { height: 22px; margin-bottom: 8.900px; border: 1px solid #d1d8dd; border-radius: 3px; padding: 0 7px; line-height: 20px; font-size: 9.400px; }
.in b { color: #000; font-weight: 700; font-size: 10.200px; letter-spacing: .1px; }
.warm { background: #fffdf4; }
.ref { padding: 18px 22px 0; }
.two .ref h6 { margin: 0; font-size: 8px; line-height: 12px; }
.check { display: flex; align-items: center; gap: 7px; margin: 19px 0 9px; height: 12px; font-size: 9.100px; }
.grid { display: grid; grid-template-columns: 56px 218px 165.500px 165.500px 55px; grid-template-rows: 30px 30px; width: 661px; border: 1px solid #d1d8dd; border-right: 0; }
.grid > * { border: solid #d1d8dd; border-width: 0 1px 1px 0; padding: 8px; font-weight: 600; color: #8d99a6; }
.grid > :nth-child(-n+5) { background: #f7f9fb; }
.grid .box { margin-top: 2px; }

/* dock */
.dock { position: absolute; left: 866px; top: 1624px; width: 1148px; height: 166px; border-radius: 48px; border: 2px solid rgba(200,170,255,.5); display: flex; align-items: flex-start; padding: 21px 0 0 21px; background: radial-gradient(ellipse 420px 260px at 98% 90%, #bd58f8, rgba(189,88,248,0)), linear-gradient(90deg, #705bc0, #7a58dc 35%, #8b56f2 60%, #a056ec); box-shadow: 0 0 90px 10px rgba(0,0,0,.26); }
.app { position: relative; width: 110px; height: 110px; flex: none; margin-right: 34px; filter: drop-shadow(0 2px 2px rgba(0,0,0,.3)); }
.run::after { content: ""; position: absolute; left: 51px; top: 131px; width: 8px; height: 8px; border-radius: 50%; background: #12006e; }
.dock hr { flex: none; width: 2px; height: 122px; border: 0; margin: -1px 47px 0 15px; background: #5418ac; }
.pad { width: 110px; height: 110px; border-radius: 25px; background: #d0c8ec; display: grid; grid-template: repeat(3, 20px) / repeat(3, 20px); gap: 7px; place-content: center; }
.pad i { border-radius: 4px; }
.p1 { background: linear-gradient(#9cf27a, #5cd243); } .p2 { background: linear-gradient(#f7d44f, #f0ab3d); } .p3 { background: linear-gradient(#efa63e, #e27b35); }
.p4 { background: linear-gradient(#ea4c3c, #a82318); } .p5 { background: linear-gradient(#d3dde2, #78797b); } .p6 { background: linear-gradient(#e94660, #ea5c6c); }
.p7 { background: linear-gradient(#b95fe6, #6f2eaa); } .p8 { background: linear-gradient(#5fd7fc, #2c5cea); } .p9 { background: linear-gradient(#83e0d0, #57ba7e); }
.chat svg { margin: -8px 0 0 -5px; }
.bin svg { margin: -5px 0 0 6px; }
.dock .bin { margin-right: 0; }
```
